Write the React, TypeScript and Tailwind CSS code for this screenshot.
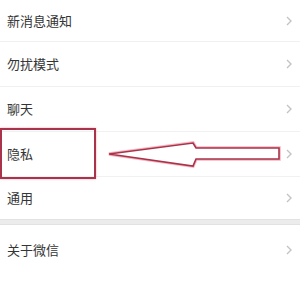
const rows = ["新消息通知", "勿扰模式", "聊天", "隐私", "通用"];

function Chevron() {
  return (
    <svg width="6" height="10" viewBox="0 0 6 10" className="mr-[8px]">
      <path d="M1 1l4 4-4 4" fill="none" stroke="#c4c4c4" strokeWidth="1.4" />
    </svg>
  );
}

function Row({ label, h, line }: { label: string; h: string; line?: boolean }) {
  return (
    <div className={`flex items-center justify-between bg-white pl-[7px] ${h} ${line ? "border-b border-[#f1f1f1]" : ""}`}>
      <span className="text-[13px] text-[#353535]">{label}</span>
      <Chevron />
    </div>
  );
}

export default function App() {
  return (
    <div
      className="relative w-[300px] h-[284px] overflow-hidden bg-white"
      style={{ fontFamily: '"Noto Sans CJK SC", "Noto Sans", sans-serif' }}
    >
      {/* settings list */}
      <div className="flex flex-col">
        <Row label={rows[0]} h="h-[42px]" line />
        <Row label={rows[1]} h="h-[45px]" line />
        <Row label={rows[2]} h="h-[45px]" line />
        <Row label={rows[3]} h="h-[45px]" line />
        <Row label={rows[4]} h="h-[42px]" />
        <div className="h-[6px] bg-[#ececec] border-y border-[#e2e2e2]" />
        <Row label="关于微信" h="h-[49px]" />
      </div>

      {/* annotation: red box */}
      <div className="absolute left-0 top-[128px] w-[96px] h-[51px] border-2 border-[#a8334a] shadow-[0_0_2px_#f3a5b5]" />

      {/* annotation: arrow */}
      <svg className="absolute left-0 top-0" width="300" height="284">
        <polygon
          points="109,154 193,143 196,148 279,148 279,159 196,159 193,166"
          fill="none"
          stroke="#f5b4c0"
          strokeWidth="3.5"
          strokeLinejoin="miter"
        />
        <polygon
          points="109,154 193,143 196,148 279,148 279,159 196,159 193,166"
          fill="#ffffff"
          stroke="#a8334a"
          strokeWidth="1.6"
          strokeLinejoin="miter"
        />
      </svg>
    </div>
  );
}
